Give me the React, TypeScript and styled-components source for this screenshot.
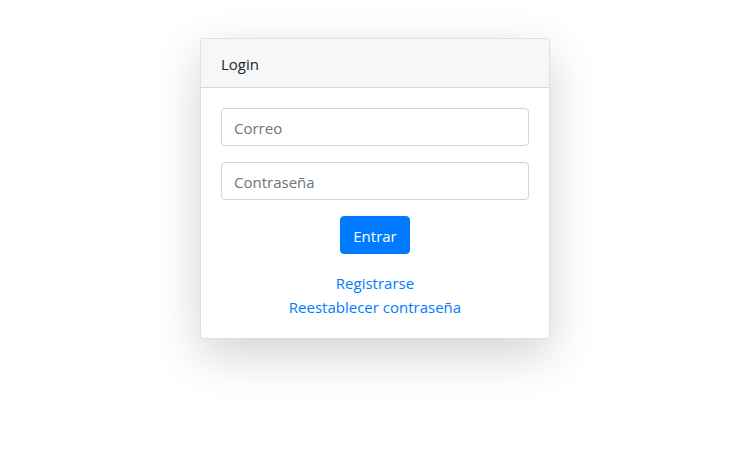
import React from "react";
import styled, { createGlobalStyle } from "styled-components";

const Global = createGlobalStyle`
  * { box-sizing: border-box; }
  html, body { height: 100%; }
  body {
    margin: 0;
    background: #fff;
    font-family: "Open Sans", "Noto Sans", sans-serif;
    font-size: 15px;
    line-height: 24px;
    color: #212529;
  }
`;

const Page = styled.div`
  display: flex;
  justify-content: center;
  padding: 38px 0 120px;
  min-height: 469px;
`;

const Card = styled.div`
  width: 350px;
  align-self: flex-start;
  background: #fff;
  border: 1px solid rgba(0, 0, 0, 0.125);
  border-radius: 4px;
  box-shadow: 0 16px 48px rgba(0, 0, 0, 0.175);
  overflow: hidden;
`;

const CardHeader = styled.div`
  padding: 13px 20px 11px;
  background: #f7f7f7;
  border-bottom: 1px solid rgba(0, 0, 0, 0.125);
  height: 49px;
`;

const CardBody = styled.form`
  padding: 20px 20px 19px;
  display: flex;
  flex-direction: column;
`;

const Input = styled.input`
  display: block;
  width: 100%;
  height: 38px;
  padding: 7px 12px 5px;
  margin: 0 0 16px;
  font: inherit;
  color: #495057;
  border: 1px solid #ced4da;
  border-radius: 4px;
  outline: none;
  &::placeholder { color: #6c757d; }
`;

const Button = styled.button`
  align-self: center;
  height: 38px;
  padding: 7px 12px 5px;
  font: inherit;
  color: #fff;
  background: #007bff;
  border: 1px solid #007bff;
  border-radius: 4px;
`;

const Links = styled.div`
  margin-top: 17px;
  display: flex;
  flex-direction: column;
  align-items: center;
`;

const Link = styled.a`
  color: #007bff;
  text-decoration: none;
`;

export default function App() {
  return (
    <>
      <Global />
      <Page>
        <Card>
          <CardHeader>Login</CardHeader>
          <CardBody onSubmit={(e) => e.preventDefault()}>
            <Input type="email" placeholder="Correo" />
            <Input type="password" placeholder="Contraseña" />
            <Button type="submit">Entrar</Button>
            <Links>
              <Link href="#">Registrarse</Link>
              <Link href="#">Reestablecer contraseña</Link>
            </Links>
          </CardBody>
        </Card>
      </Page>
    </>
  );
}
